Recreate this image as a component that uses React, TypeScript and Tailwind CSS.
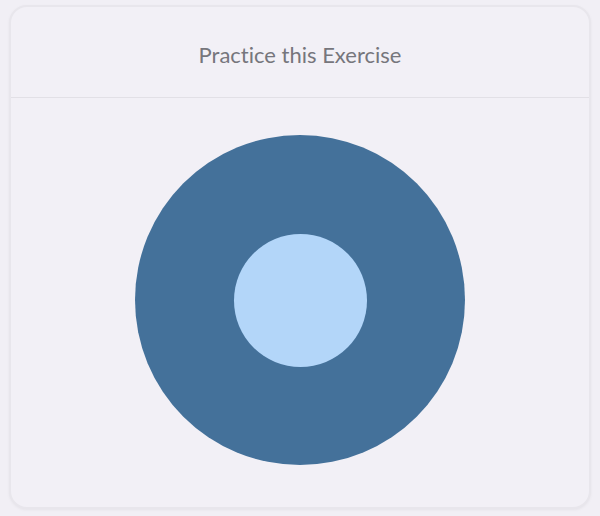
export default function App() {
  return (
    <div className="w-[600px] h-[516px] bg-[#f1eff5] pt-[5px] px-[9px] pb-[7px]">
      <div className="h-full flex flex-col rounded-[18px] border-2 border-[#e8e6ec] bg-[#f2f0f6] shadow-[0_1px_3px_rgba(0,0,0,0.05)]">
        <div className="h-[91px] flex items-center justify-center border-b border-[#e2e0e6]">
          <h2 className="text-[22px] text-[#76767c] font-['Lato',sans-serif] [font-variant-ligatures:none] mt-[4px]">
            Practice this Exercise
          </h2>
        </div>
        <div className="flex-1 flex items-start justify-center pt-[37px]">
          <div className="w-[330px] h-[330px] rounded-full bg-[#44719a] flex items-center justify-center">
            <div className="w-[133px] h-[133px] rounded-full bg-[#b3d6f9]" />
          </div>
        </div>
      </div>
    </div>
  );
}
